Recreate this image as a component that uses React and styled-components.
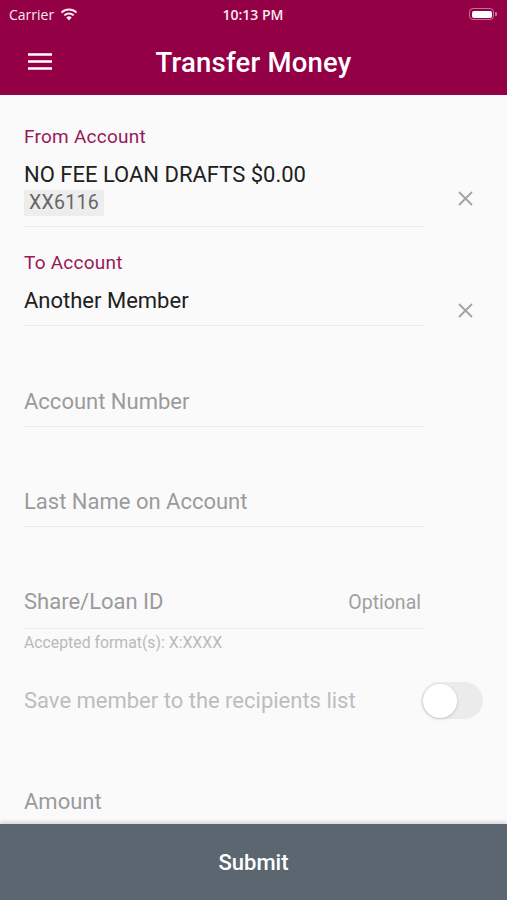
import React from 'react';
import styled, { createGlobalStyle } from 'styled-components';

const GlobalStyle = createGlobalStyle`
  html, body {
    margin: 0;
    padding: 0;
    background: #fafafa;
  }
  * {
    box-sizing: border-box;
  }
`;

const Page = styled.div`
  width: 507px;
  height: 900px;
  display: flex;
  flex-direction: column;
  font-family: Roboto, "Noto Sans", sans-serif;
  background: #fafafa;
  overflow: hidden;
`;

const TopBar = styled.div`
  background: #930045;
  color: #fff;
`;

const StatusBar = styled.div`
  height: 28px;
  display: grid;
  grid-template-columns: 1fr auto 1fr;
  align-items: center;
  padding: 0 10px 0 9px;
  font-family: "Open Sans", "Liberation Sans", sans-serif;
  font-size: 14px;
  color: #fbe9f0;
`;

const Carrier = styled.div`
  display: flex;
  align-items: center;
  gap: 6px;
`;

const Clock = styled.div`
  font-weight: 600;
`;

const Battery = styled.div`
  justify-self: end;
  display: flex;
  align-items: center;
`;

const BatteryBody = styled.div`
  width: 25px;
  height: 12px;
  border: 1.5px solid rgba(255, 255, 255, 0.45);
  border-radius: 4px;
  padding: 1.5px;
  & > div {
    width: 100%;
    height: 100%;
    background: #fff;
    border-radius: 2px;
  }
`;

const BatteryCap = styled.div`
  width: 2px;
  height: 4px;
  margin-left: 1px;
  background: rgba(255, 255, 255, 0.45);
  border-radius: 0 1px 1px 0;
`;

const NavBar = styled.div`
  height: 67px;
  display: grid;
  grid-template-columns: 80px 1fr 80px;
  align-items: center;
`;

const MenuButton = styled.div`
  padding-left: 28px;
  display: flex;
  align-items: center;
`;

const Title = styled.div`
  text-align: center;
  font-size: 27.5px;
  font-weight: 500;
  letter-spacing: 0.2px;
  padding-top: 1px;
`;

const Form = styled.div`
  flex: 1;
  overflow: hidden;
  padding: 30px 0 0 24px;
`;

const FieldRow = styled.div`
  display: flex;
  align-items: center;
`;

const FieldBody = styled.div`
  width: 400px;
  border-bottom: 1px solid #ececec;
  padding-top: ${(p) => p.$top || 0}px;
  padding-bottom: ${(p) => p.$bottom || 11}px;
`;

const Label = styled.div`
  font-size: 19px;
  line-height: 24px;
  letter-spacing: 0.25px;
  color: #98195a;
  margin-bottom: 13px;
`;

const Value = styled.div`
  font-size: 22px;
  line-height: 26px;
  color: #202020;
`;

const Chip = styled.span`
  display: inline-block;
  margin-top: 2px;
  height: 26px;
  line-height: 26px;
  padding: 0 5px;
  background: #ededed;
  color: #666;
  font-size: 19.5px;
  letter-spacing: 0.3px;
`;

const ClearButton = styled.div`
  width: 83px;
  display: flex;
  justify-content: center;
  align-self: flex-start;
  margin-top: ${(p) => p.$offset || 0}px;
`;

const Placeholder = styled.div`
  display: flex;
  justify-content: space-between;
  align-items: baseline;
  font-size: 22px;
  line-height: 26px;
  color: #9b9b9b;
`;

const Optional = styled.span`
  font-size: 19.5px;
  color: #a0a0a0;
  padding-right: 3px;
`;

const Helper = styled.div`
  font-size: 15.8px;
  line-height: 18px;
  color: #b9b9b9;
  margin-top: 5px;
`;

const SaveRow = styled.div`
  display: flex;
  align-items: center;
  justify-content: space-between;
  margin-top: 30px;
  padding-right: 24px;
  font-size: 22px;
  color: #bdbdbd;
`;

const Toggle = styled.div`
  width: 62px;
  height: 37px;
  border-radius: 19px;
  background: #ebebeb;
  padding: 2px;
  display: flex;
  align-items: center;
`;

const Knob = styled.div`
  width: 34px;
  height: 34px;
  border-radius: 50%;
  background: #fff;
  box-shadow: 0 1px 3px rgba(0, 0, 0, 0.18);
`;

const AmountBody = styled.div`
  width: 400px;
  padding-top: 70px;
  font-size: 22px;
  line-height: 26px;
  color: #9b9b9b;
`;

const SubmitBar = styled.div`
  height: 76px;
  flex-shrink: 0;
  background: #5b6670;
  color: #fff;
  display: flex;
  align-items: center;
  justify-content: center;
  font-size: 22px;
  font-weight: 500;
  box-shadow: 0 -2px 4px rgba(0, 0, 0, 0.15);
  position: relative;
`;

const Clear = () =>
  <svg width="15" height="15" viewBox="0 0 15 15">
    <path d="M1.5 1.5 L13.5 13.5 M13.5 1.5 L1.5 13.5" stroke="#a3a3a3" strokeWidth="1.8" strokeLinecap="round" />
  </svg>;

const Wifi = () =>
  <svg width="18" height="13" viewBox="0 0 18 13">
    <path d="M9 12.5 L6.3 9.4 A4 4 0 0 1 11.7 9.4 Z" fill="#fbe9f0" />
    <path d="M4.3 7.4 A6.8 6.8 0 0 1 13.7 7.4" stroke="#fbe9f0" strokeWidth="2" fill="none" />
    <path d="M1.5 4.6 A10.8 10.8 0 0 1 16.5 4.6" stroke="#fbe9f0" strokeWidth="2" fill="none" />
  </svg>;

const Hamburger = () =>
  <svg width="24" height="17" viewBox="0 0 24 17">
    <path d="M0 1.5 H24 M0 8.5 H24 M0 15.5 H24" stroke="#fff" strokeWidth="2.4" />
  </svg>;

const App = () =>
  <Page>
    <GlobalStyle />
    <TopBar>
      <StatusBar>
        <Carrier>Carrier <Wifi /></Carrier>
        <Clock>10:13 PM</Clock>
        <Battery>
          <BatteryBody><div /></BatteryBody>
          <BatteryCap />
        </Battery>
      </StatusBar>
      <NavBar>
        <MenuButton><Hamburger /></MenuButton>
        <Title>Transfer Money</Title>
        <div />
      </NavBar>
    </TopBar>

    <Form>
      <FieldRow>
        <FieldBody $bottom={10}>
          <Label>From Account</Label>
          <Value>NO FEE LOAN DRAFTS $0.00</Value>
          <Chip>XX6116</Chip>
        </FieldBody>
        <ClearButton $offset={66}><Clear /></ClearButton>
      </FieldRow>

      <FieldRow>
        <FieldBody $top={24} $bottom={11}>
          <Label>To Account</Label>
          <Value>Another Member</Value>
        </FieldBody>
        <ClearButton $offset={76}><Clear /></ClearButton>
      </FieldRow>

      <FieldRow>
        <FieldBody $top={63}>
          <Placeholder>Account Number</Placeholder>
        </FieldBody>
      </FieldRow>

      <FieldRow>
        <FieldBody $top={62}>
          <Placeholder>Last Name on Account</Placeholder>
        </FieldBody>
      </FieldRow>

      <FieldRow>
        <FieldBody $top={62} $bottom={12}>
          <Placeholder>
            <span>Share/Loan ID</span>
            <Optional>Optional</Optional>
          </Placeholder>
        </FieldBody>
      </FieldRow>
      <Helper>Accepted format(s): X:XXXX</Helper>

      <SaveRow>
        <span>Save member to the recipients list</span>
        <Toggle><Knob /></Toggle>
      </SaveRow>

      <AmountBody>Amount</AmountBody>
    </Form>

    <SubmitBar>Submit</SubmitBar>
  </Page>;

export default App;
